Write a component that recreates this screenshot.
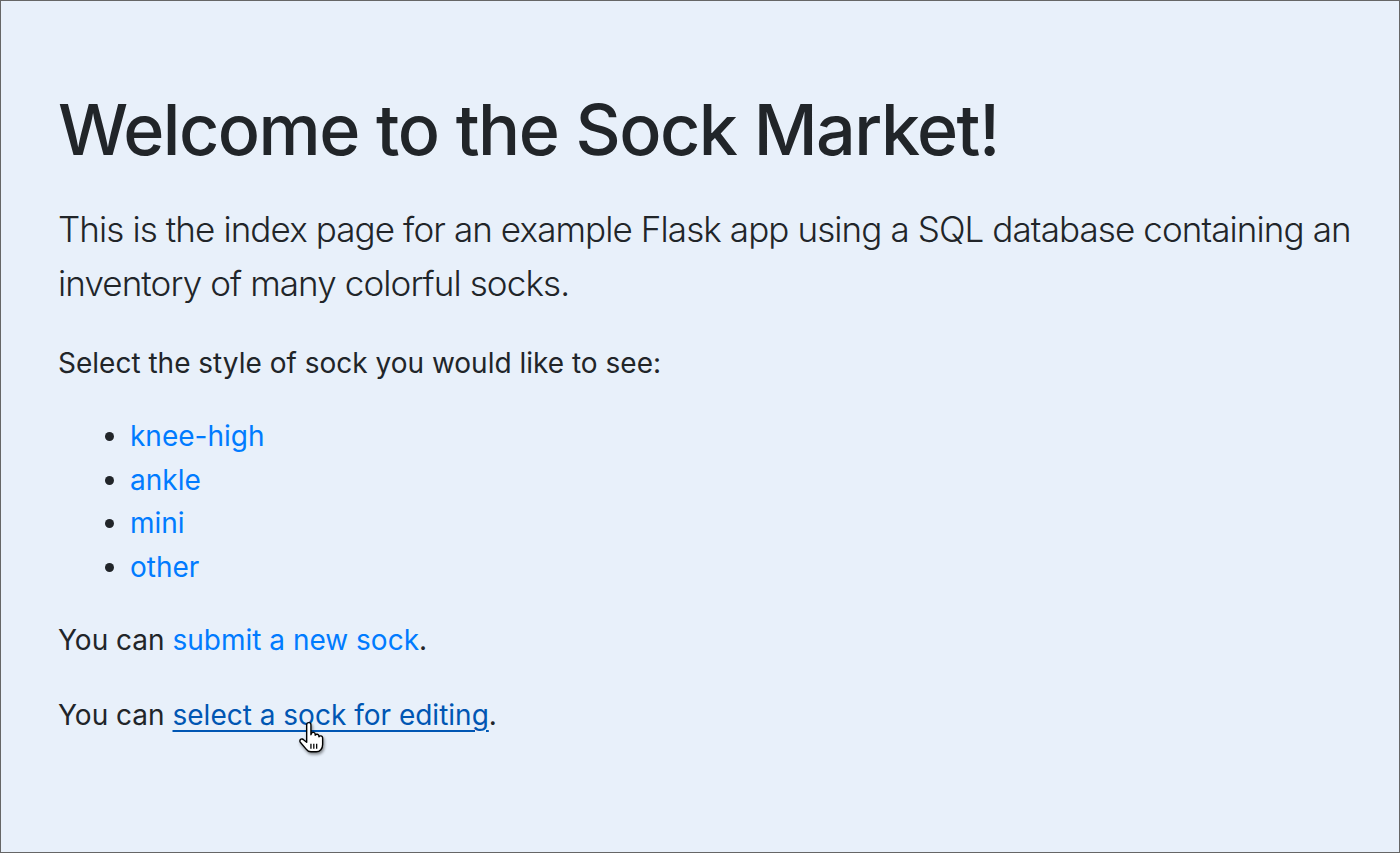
import React from "react";

const styles = ["knee-high", "ankle", "mini", "other"];

// pointer cursor captured in the screenshot
function HandCursor() {
    return (
        <svg
            width="30"
            height="34"
            viewBox="0 0 28 32"
            className="absolute left-[296px] top-[720px] pointer-events-none"
            style={{ filter: "drop-shadow(1px 2px 1.5px rgba(0,0,0,0.45))" }}
        >
            <path
                d="M9 3.5a2 2 0 0 1 4 0V13l.4-1.2a1.9 1.9 0 0 1 3.6.6v1a1.9 1.9 0 0 1 3.5.5v1a1.9 1.9 0 0 1 3.5.8V22c0 4-2.5 7-6 7h-5c-2 0-3.5-1-4.5-2.5L3 20a1.9 1.9 0 0 1 3-2.4L9 20Z"
                fill="#fff"
                stroke="#000"
                strokeWidth="1.3"
                strokeLinejoin="round"
            />
            <path d="M13 21.5v4.5M15.7 21.5v4.5M18.4 21.5v4.5" stroke="#000" strokeWidth="1.2" />
        </svg>
    );
}

export default function App() {
    return (
        <div
            className="relative h-[853px] box-border border border-[#666] bg-[#e8f0fa] pl-[57px] pt-[87px] text-[#212529]"
            style={{ fontFamily: "Inter, 'Noto Sans', sans-serif" }}
        >
            <h1 className="text-[70px] font-medium leading-[1.2] tracking-[-1.5px] mb-[30px]">
                Welcome to the Sock Market!
            </h1>
            <p className="text-[35px] font-light leading-[1.55] mb-[31px] pr-[20px] tracking-[-0.9px]">
                This is the index page for an example Flask app using a SQL database containing an
                inventory of many colorful socks.
            </p>
            <p className="text-[28px] leading-[1.55] mb-[30px]">
                Select the style of sock you would like to see:
            </p>
            <ul className="list-disc pl-[72px] mb-[29px] text-[28px] leading-[43.7px]">
                {styles.map((s) => (
                    <li key={s}>
                        <a href="#" className="text-[#007bff]">
                            {s}
                        </a>
                    </li>
                ))}
            </ul>
            <p className="text-[28px] leading-[1.55] mb-[32px]">
                You can{" "}
                <a href="#" className="text-[#007bff]">
                    submit a new sock
                </a>
                .
            </p>
            <p className="text-[28px] leading-[1.55]">
                You can{" "}
                <a href="#" className="text-[#0056b3] underline underline-offset-[5px] decoration-[1.5px]">
                    select a sock for editing
                </a>
                .
            </p>
            <HandCursor />
        </div>
    );
}
